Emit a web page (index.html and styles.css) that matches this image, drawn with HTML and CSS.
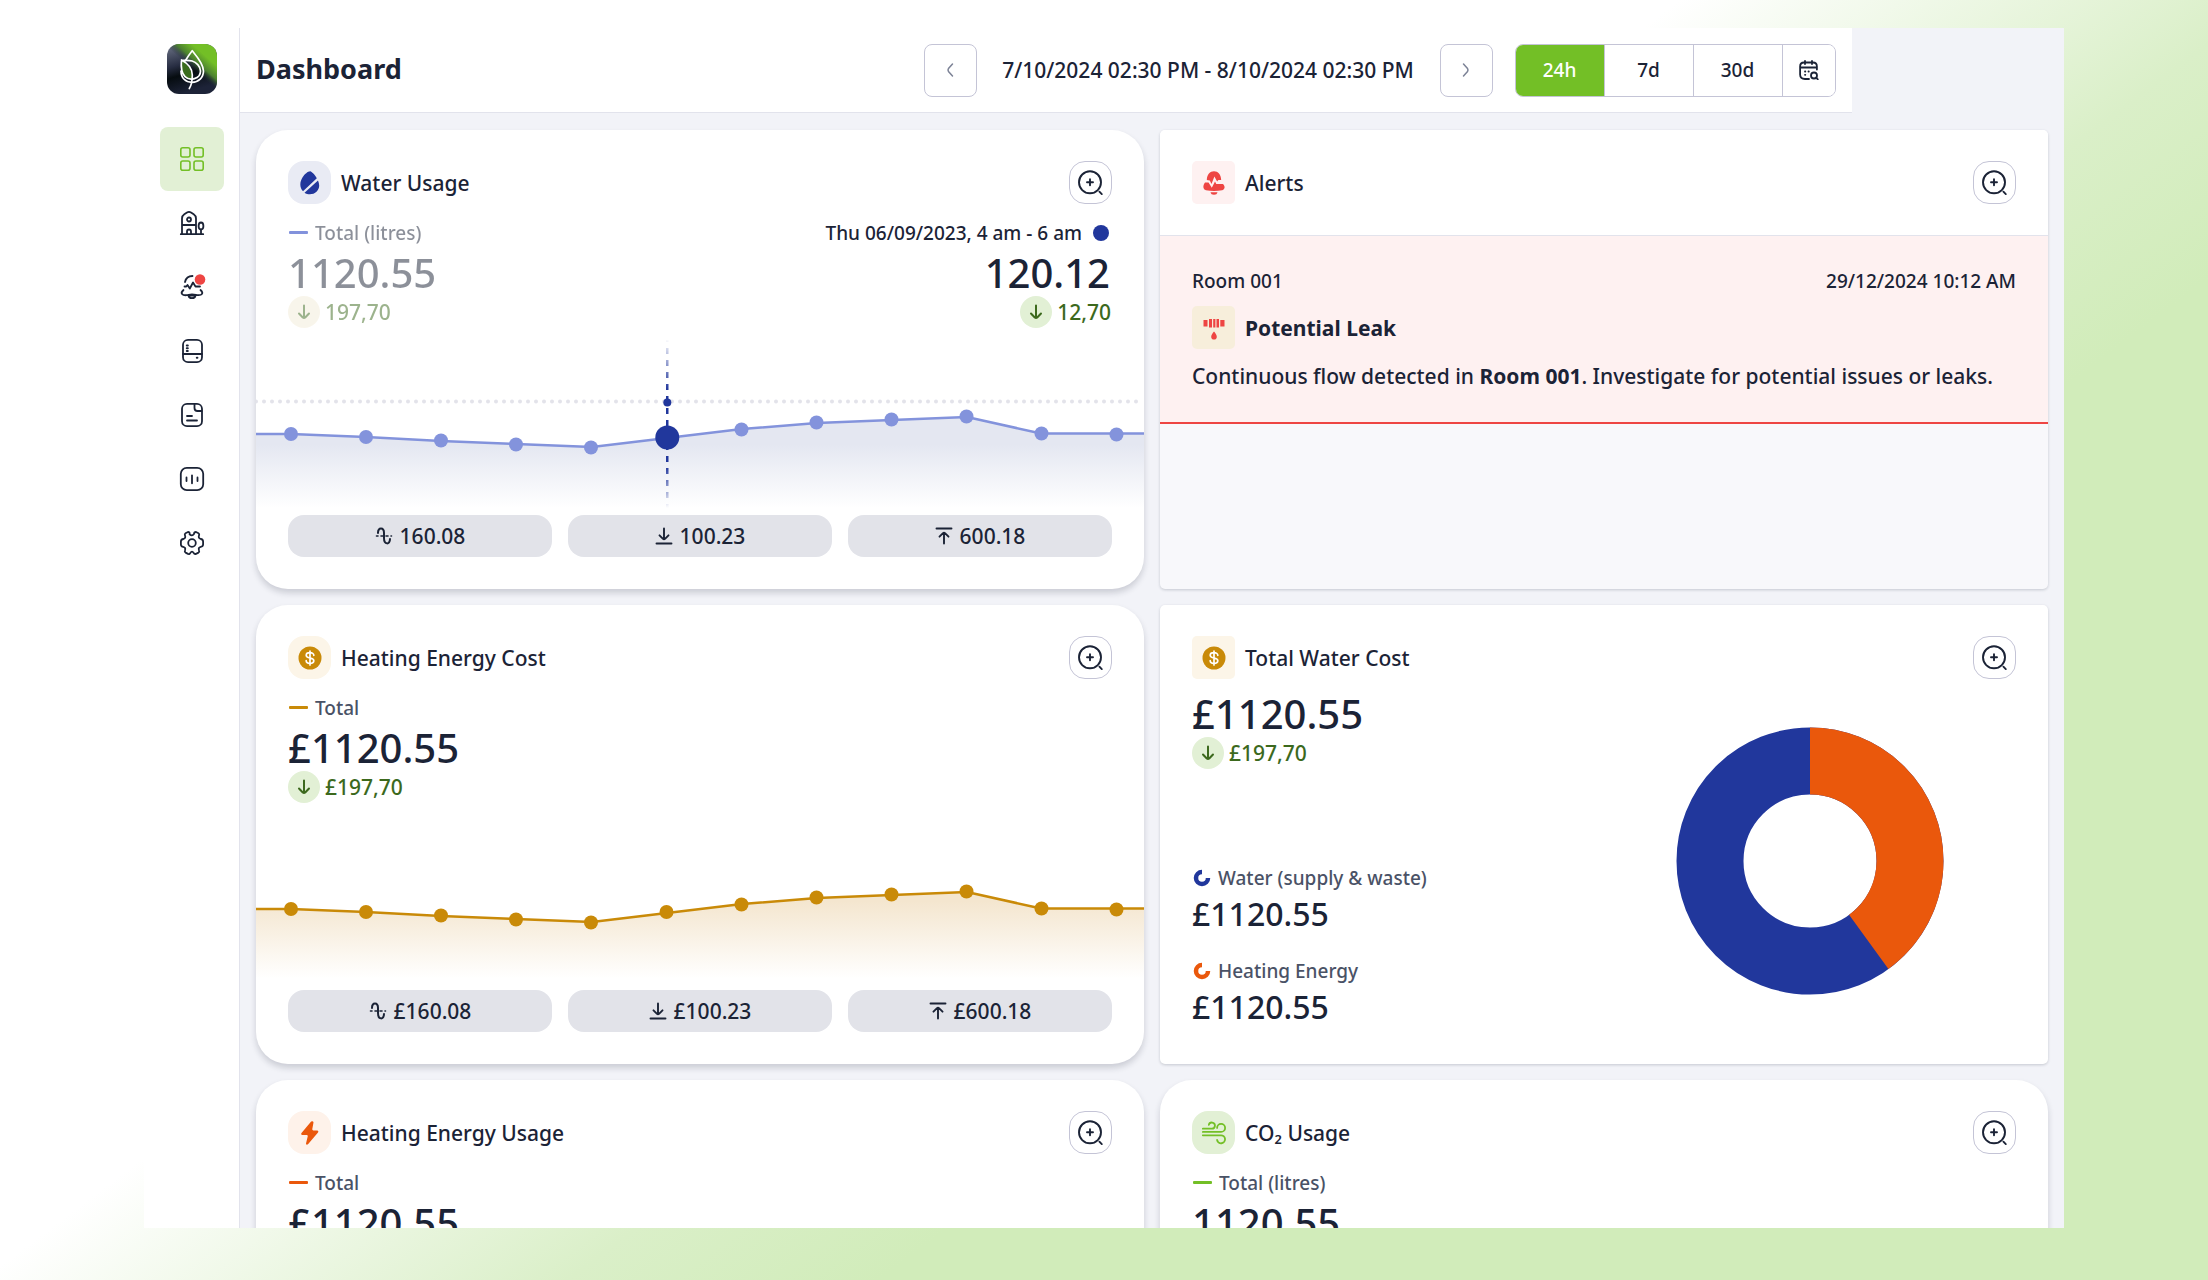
FILE: index.html
```html
<!DOCTYPE html>
<html lang="en">
<head>
<meta charset="utf-8">
<title>Dashboard</title>
<meta name="viewport" content="width=device-width, initial-scale=1">
<link rel="stylesheet" href="styles.css">
</head>
<body>
<svg class="defs" aria-hidden="true">
  <symbol id="i-zoom" viewBox="0 0 28 28"><g fill="none" stroke="currentColor" stroke-width="1.9" stroke-linecap="round"><circle cx="13" cy="13.300" r="11"/><path d="M13 10.300v6M10 13.300h6M22.400 22.700l2.400 2.400"/></g></symbol>
  <symbol id="i-down" viewBox="0 0 16 16"><path d="M8 1.500v12.500M3 9.500l3.800 4q1.200 1 2.400 0l3.800-4" fill="none" stroke="currentColor" stroke-width="2" stroke-linecap="round" stroke-linejoin="round"/></symbol>
  <symbol id="i-wave" viewBox="0 0 18 18"><g fill="none" stroke="currentColor" stroke-width="2" stroke-linecap="round"><path d="M3 6c0-6 6-6 6 0v5c0 7 6 7 6 1"/><path d="M1.500 9h1.500M6 9h2M11 9h2M16 9h.5" stroke-width="1.600"/></g></symbol>
  <symbol id="i-min" viewBox="0 0 18 18"><path d="M9 1.500v10.500M4.500 8.300l3.500 3.500q1 .8 2 0l3.500-3.500M1.500 16.500h15" fill="none" stroke="currentColor" stroke-width="1.900" stroke-linecap="round" stroke-linejoin="round"/></symbol>
  <symbol id="i-max" viewBox="0 0 18 18"><path d="M9 16.500v-10.500M4.500 9.700l3.500-3.500q1-.8 2 0l3.500 3.500M1.500 1.500h15" fill="none" stroke="currentColor" stroke-width="1.900" stroke-linecap="round" stroke-linejoin="round"/></symbol>
  <symbol id="i-coin" viewBox="0 0 24 24"><circle cx="12" cy="12" r="11.500" fill="currentColor"/><path d="M15.800 9.300c0-1.700-1.600-2.600-3.800-2.600s-3.800.9-3.800 2.600 1.600 2.400 3.800 2.700 3.800 1 3.800 2.700-1.600 2.600-3.800 2.600-3.800-.9-3.800-2.600M12 5v14" fill="none" stroke="#fff" stroke-width="1.700" stroke-linecap="round"/></symbol>
  <symbol id="i-ring" viewBox="0 0 18 18"><path d="M9 3A6 6 0 1 0 15 9" fill="none" stroke="currentColor" stroke-width="4.500"/></symbol>
  <linearGradient id="fill-water" x1="0" y1="0" x2="0" y2="1"><stop offset="0.3" stop-color="#e4e7f1"/><stop offset="1" stop-color="#fff"/></linearGradient>
  <linearGradient id="fill-heat" x1="0" y1="0" x2="0" y2="1"><stop offset="0.1" stop-color="#f4e6cf"/><stop offset="0.950" stop-color="#fff"/></linearGradient>
  <linearGradient id="cursor-fade" gradientUnits="userSpaceOnUse" x1="0" y1="11" x2="0" y2="180"><stop offset="0" stop-color="#21379c" stop-opacity="0"/><stop offset="0.300" stop-color="#21379c"/><stop offset="0.750" stop-color="#21379c"/><stop offset="1" stop-color="#21379c" stop-opacity="0"/></linearGradient>
  <linearGradient id="logo-green" x1="0.900" y1="0" x2="0.200" y2="0.800"><stop offset="0.250" stop-color="#73bf26"/><stop offset="0.450" stop-color="#4c8030"/><stop offset="0.600" stop-color="#1a2234" stop-opacity="0"/></linearGradient>
  <linearGradient id="logo-dark" x1="0" y1="0" x2="0.300" y2="1"><stop offset="0" stop-color="#70778a"/><stop offset="0.450" stop-color="#272d42"/><stop offset="0.650" stop-color="#060c10"/><stop offset="1" stop-color="#1d2338"/></linearGradient>
</svg>

<div class="app">
  <aside class="sidebar">
    <a class="logo" href="#" aria-label="Home">
      <svg viewBox="0 0 52 52"><rect x="1" y="1" width="50" height="50" rx="12" fill="url(#logo-dark)"/><rect x="1" y="1" width="50" height="50" rx="12" fill="url(#logo-green)"/><path d="M15.500 17c-.5 8 .5 14 4 17 2 1.800 4.600 2.400 6.500 2.300 1-7-3-14-10.500-19.300z" fill="#3a6b1c"/><g fill="none" stroke="#fff" stroke-width="1.700" stroke-linecap="round" stroke-linejoin="round"><path d="M19.500 17.500c2-3.500 4.500-7 6.700-9.800 4.500 5.500 11.300 13 11.300 20.300 0 6.500-5 11.300-11.500 11.300s-11-4.300-11-11.300"/><path d="M15.500 17c-.8 8 .2 13.500 3.500 16.700 4.500 4.300 15.500 2.800 15.500-5.700 0-4.500-4.500-9-8.300-10-3.500-1-6.700-.5-10.700-1zM15.500 17c7.500 4 10.800 9.500 10.800 15 0 4-1 10.500-3 13.500"/></g></svg>
    </a>
    <nav class="nav" aria-label="Main">
      <a class="nav-item active" href="#" aria-label="Dashboard"><svg viewBox="0 0 24 24"><g fill="none" stroke="currentColor" stroke-width="1.600"><rect x=".8" y=".8" width="9.200" height="9.200" rx="2"/><rect x="14" y=".8" width="9.200" height="9.200" rx="2"/><rect x=".8" y="14" width="9.200" height="9.200" rx="2"/><rect x="14" y="14" width="9.200" height="9.200" rx="2"/></g></svg></a>
      <a class="nav-item" href="#" aria-label="Buildings"><svg viewBox="0 0 24 24"><g fill="none" stroke="currentColor" stroke-width="1.800" stroke-linecap="round" stroke-linejoin="round"><path d="M.8 23.200h22.400M2 23V7.500q0-2.700 2.300-4.200L7 1.500q2-1.300 4 0l2.700 1.800Q16 4.800 16 7.500V23M2 14h14M7 23v-2.500q0-2 2-2t2 2V23M21 23v-4"/><circle cx="9" cy="8.500" r="2"/><ellipse cx="21" cy="15" rx="2.400" ry="3.500"/></g></svg></a>
      <a class="nav-item" href="#" aria-label="Alerts"><svg viewBox="0 0 24 24"><g fill="none" stroke="currentColor" stroke-width="1.800" stroke-linecap="round" stroke-linejoin="round"><path d="M5 7C6 2.500 9 1 12.500 1M20 11.500h-4.500l-2.500-4-3.200 6-2.300-3.500L6.300 11.500H4.500M3.500 15c-4 3.500-1 5.500 3 5.200 2-.2 3-.7 5.500-.7s4 .5 6 .7c4 .2 6-2 2.500-5.200M8.500 20.500c.5 3.500 6.500 3.500 7 0z"/></g><circle cx="20" cy="4.500" r="5.300" fill="#ee4543"/></svg></a>
      <a class="nav-item" href="#" aria-label="Meters"><svg viewBox="0 0 24 24"><g fill="none" stroke="currentColor" stroke-width="1.800" stroke-linecap="round"><rect x="3" y=".8" width="19" height="22.400" rx="5"/><path d="M3 15h19"/><path d="M6.800 6.500h1M6.800 9.300h1M6.800 12h1M16.800 18.800h.6" stroke-width="2"/></g></svg></a>
      <a class="nav-item" href="#" aria-label="Reports"><svg viewBox="0 0 24 24"><g fill="none" stroke="currentColor" stroke-width="1.800" stroke-linecap="round"><rect x="2" y=".8" width="20" height="22.400" rx="5"/><path d="M14.500 1.500v3.500q0 3 3 3h4M7 13h5M7 17.500h10"/></g></svg></a>
      <a class="nav-item" href="#" aria-label="Statistics"><svg viewBox="0 0 24 24"><g fill="none" stroke="currentColor" stroke-width="1.800" stroke-linecap="round"><rect x=".8" y=".8" width="22.400" height="22.400" rx="6"/><path d="M6.500 10.500v3.500M12 8.300v8M17.500 10.500v3.500"/></g></svg></a>
      <a class="nav-item" href="#" aria-label="Settings"><svg viewBox="0 0 24 24"><g fill="none" stroke="currentColor" stroke-width="1.800" stroke-linejoin="round"><path d="M9.600 3.300Q10 1 8 1L5.500 2.300Q4.300 3 5 4.500 6 7 3.500 8 1 8.200.9 10.500v3Q1 15.700 3.200 15.800 6 16.500 5 19.300q-.7 1.500.6 2.300L8 22.900q2 .5 2.300-1Q12 19.500 13.700 21.900q.6 1.500 2.300 1l2.500-1.300q1.200-.8.500-2.300-1-2.800 1.800-3.500Q23 15.600 23.100 13.500v-3Q23 8.200 20.700 8 18 7.200 19 4.500q.7-1.500-.5-2.200L16 1q-2 0-2 2Q12 5.500 9.600 3.300z"/><circle cx="12" cy="12" r="3.800"/></g></svg></a>
    </nav>
  </aside>

  <div class="main">
    <header class="topbar">
      <h1>Dashboard</h1>
      <div class="range">
        <button class="step" type="button" aria-label="Previous period"><svg viewBox="0 0 16 16"><path d="M10.500 2l-4 4.500q-1 1.500 0 3l4 4.500" fill="none" stroke="currentColor" stroke-width="1.500" stroke-linecap="round"/></svg></button>
        <span class="range-text">7/10/2024 02:30 PM - 8/10/2024 02:30 PM</span>
        <button class="step" type="button" aria-label="Next period"><svg viewBox="0 0 16 16"><path d="M5.500 2l4 4.500q1 1.500 0 3l-4 4.500" fill="none" stroke="currentColor" stroke-width="1.500" stroke-linecap="round"/></svg></button>
      </div>
      <div class="segments">
        <button class="segment selected" type="button">24h</button>
        <button class="segment" type="button">7d</button>
        <button class="segment" type="button">30d</button>
        <button class="segment calendar" type="button" aria-label="Pick dates"><svg viewBox="0 0 20 20"><g fill="none" stroke="currentColor" stroke-width="1.800" stroke-linecap="round"><path d="M10 19H6q-4.900 0-4.900-4.500V6.500Q1.100 2.500 5 2.500h9q3.900 0 3.900 4v3M1.100 7.500h16.800M6 1v3M13 1v3"/><circle cx="15" cy="15.500" r="3"/><path d="M17.300 17.800l1.500 1.500M6 11.500h.3M9.500 11.500h.3M6 14.800h.3"/></g></svg></button>
      </div>
    </header>

    <main class="grid">
      <section class="card round">
        <div class="card-head">
          <span class="badge water"><svg viewBox="0 0 24 24"><path d="M12.300.3c1.200.3 4.800 3.500 6.500 7L5 20.300C1 16 2 10.300 4.600 6.300 6.500 3.300 10 .2 12.300.3zM20 9.500c2 4.500 1.500 8.500-1.500 11.300-3 3-8.500 3.300-12 1z" fill="currentColor"/></svg></span>
          <h2>Water Usage</h2>
          <button class="zoom" type="button" aria-label="Enlarge Water Usage"><svg><use href="#i-zoom"/></svg></button>
        </div>
        <div class="readings">
          <div class="reading muted">
            <p class="legend water-soft"><span class="dash"></span>Total (litres)</p>
            <p class="value">1120.55</p>
            <p class="delta"><span class="arrow"><svg><use href="#i-down"/></svg></span>197,70</p>
          </div>
          <div class="reading end">
            <p class="legend dark">Thu 06/09/2023, 4 am - 6 am<span class="dot"></span></p>
            <p class="value">120.12</p>
            <p class="delta"><span class="arrow"><svg><use href="#i-down"/></svg></span>12,70</p>
          </div>
        </div>
        <svg class="chart" viewBox="0 0 888 187" preserveAspectRatio="xMidYMid slice" role="img" aria-label="Water usage over time">
          <path d="M0 106H35L110 109 185 113 260 116 336 119 411 110 486 101 561 95 636 92 711 89 785 105.500H888V180H0z" fill="url(#fill-water)"/>
          <path d="M0 73.500H888" stroke="#e3e3ea" stroke-width="4" stroke-linecap="round" stroke-dasharray="0 8"/>
          <path d="M0 106H35L110 109 185 113 260 116 336 119 411 110 486 101 561 95 636 92 711 89 785 105.500H888" fill="none" stroke="#8393dc" stroke-width="2.500"/>
          <g fill="#8393dc"><circle cx="35" cy="106" r="7"/><circle cx="110" cy="109" r="7"/><circle cx="185" cy="112.500" r="7"/><circle cx="260" cy="116.500" r="7"/><circle cx="335" cy="119.500" r="7"/><circle cx="485.500" cy="101.500" r="7"/><circle cx="560.500" cy="94.500" r="7"/><circle cx="635.500" cy="91.500" r="7"/><circle cx="710.500" cy="88.500" r="7"/><circle cx="785.500" cy="105.500" r="7"/><circle cx="860.500" cy="106.500" r="7"/></g>
          <rect x="410" y="11" width="2.500" height="169" fill="url(#cursor-fade)" mask="url(#cursor-dashes)"/>
          <mask id="cursor-dashes" maskUnits="userSpaceOnUse" x="400" y="0" width="24" height="187"><path d="M411.300 12V181" stroke="#fff" stroke-width="4" stroke-dasharray="6 6" stroke-dashoffset="4"/></mask>
          <g fill="#21379c"><circle cx="411.300" cy="74.500" r="4"/><circle cx="411.300" cy="109.500" r="12"/></g>
        </svg>
        <ul class="stats">
          <li><svg><use href="#i-wave"/></svg>160.08</li>
          <li><svg><use href="#i-min"/></svg>100.23</li>
          <li><svg><use href="#i-max"/></svg>600.18</li>
        </ul>
      </section>

      <section class="card alerts">
        <div class="card-head">
          <span class="badge alert"><svg viewBox="0 0 24 24"><path d="M4.800 9C5 3.500 8 .3 12 .3S19 3.500 19.200 9h-2.800l-1.300 1.500L12.400 5.500 9.500 13 7.800 9.500 4.800 9zM3 11.500h3.500l3.300 5.300L13 10.500l1.300 2.500h6.700c2.500 2.500 2 5.500-1 6.300-5 1-11 1-16 0-3-.8-3.500-4.500-1-7.800zM8.500 21.300h7q-.5 2.500-3.500 2.500t-3.500-2.500z" fill="currentColor"/></svg></span>
          <h2>Alerts</h2>
          <button class="zoom" type="button" aria-label="Enlarge Alerts"><svg><use href="#i-zoom"/></svg></button>
        </div>
        <article class="alert-item">
          <p class="alert-meta"><span>Room 001</span><time>29/12/2024 10:12 AM</time></p>
          <h3><span class="badge leak"><svg viewBox="0 0 24 24"><path d="M1.500 4h4v6.500h-4zM7 3h3v8.500H7zM11.200 3h2.200v8.500h-2.200zM14.500 3h2.500v8.500h-2.500zM18.300 4h4.200v6.500h-4.200zM12 15.500c1.500 1.800 2.800 3.800 2.800 5.200a2.800 2.800 0 0 1-5.600 0c0-1.400 1.300-3.400 2.800-5.200z" fill="currentColor"/></svg></span>Potential Leak</h3>
          <p class="alert-text">Continuous flow detected in <b>Room 001</b>. Investigate for potential issues or leaks.</p>
        </article>
      </section>

      <section class="card round">
        <div class="card-head">
          <span class="badge coin"><svg><use href="#i-coin"/></svg></span>
          <h2>Heating Energy Cost</h2>
          <button class="zoom" type="button" aria-label="Enlarge Heating Energy Cost"><svg><use href="#i-zoom"/></svg></button>
        </div>
        <div class="readings">
          <div class="reading">
            <p class="legend gold"><span class="dash"></span>Total</p>
            <p class="value">£1120.55</p>
            <p class="delta"><span class="arrow"><svg><use href="#i-down"/></svg></span>£197,70</p>
          </div>
        </div>
        <svg class="chart" viewBox="0 0 888 187" preserveAspectRatio="xMidYMid slice" role="img" aria-label="Heating energy cost over time">
          <path d="M0 106H35L110 109 185 113 260 116 336 119 411 110 486 101 561 95 636 92 711 89 785 105.500H888V180H0z" fill="url(#fill-heat)"/>
          <path d="M0 106H35L110 109 185 113 260 116 336 119 411 110 486 101 561 95 636 92 711 89 785 105.500H888" fill="none" stroke="#c98a08" stroke-width="2.500"/>
          <g fill="#c98a08"><circle cx="35" cy="106" r="7"/><circle cx="110" cy="109" r="7"/><circle cx="185" cy="112.500" r="7"/><circle cx="260" cy="116.500" r="7"/><circle cx="335" cy="119.500" r="7"/><circle cx="410.500" cy="109" r="7"/><circle cx="485.500" cy="101.500" r="7"/><circle cx="560.500" cy="94.500" r="7"/><circle cx="635.500" cy="91.500" r="7"/><circle cx="710.500" cy="88.500" r="7"/><circle cx="785.500" cy="105.500" r="7"/><circle cx="860.500" cy="106.500" r="7"/></g>
        </svg>
        <ul class="stats">
          <li><svg><use href="#i-wave"/></svg>£160.08</li>
          <li><svg><use href="#i-min"/></svg>£100.23</li>
          <li><svg><use href="#i-max"/></svg>£600.18</li>
        </ul>
      </section>

      <section class="card">
        <div class="card-head">
          <span class="badge coin square"><svg><use href="#i-coin"/></svg></span>
          <h2>Total Water Cost</h2>
          <button class="zoom" type="button" aria-label="Enlarge Total Water Cost"><svg><use href="#i-zoom"/></svg></button>
        </div>
        <div class="split">
          <div class="split-text">
            <p class="value">£1120.55</p>
            <p class="delta"><span class="arrow"><svg><use href="#i-down"/></svg></span>£197,70</p>
            <div class="breakdown">
              <div><p class="legend blue"><svg><use href="#i-ring"/></svg>Water (supply &amp; waste)</p><p class="subvalue">£1120.55</p></div>
              <div><p class="legend orange"><svg><use href="#i-ring"/></svg>Heating Energy</p><p class="subvalue">£1120.55</p></div>
            </div>
          </div>
          <svg class="donut" viewBox="0 0 268 268" role="img" aria-label="Water 60%, heating energy 40%">
            <circle cx="134" cy="134" r="100" fill="none" stroke="#21379c" stroke-width="67"/>
            <circle cx="134" cy="134" r="100" fill="none" stroke="#ea580c" stroke-width="67" pathLength="100" stroke-dasharray="40 60" transform="rotate(-90 134 134)"/>
          </svg>
        </div>
      </section>

      <section class="card round">
        <div class="card-head">
          <span class="badge bolt"><svg viewBox="0 0 24 24"><path d="M14.500.3Q13 .2 12.300 1.500L3.500 12q-1 1.800 1 2h4.200q1.300.2 1 1.500L8 22.500q.3 2 2 .8L20 11.500q1-1.700-1-2h-3.700q-1.200-.2-1-1.500l1.200-6.500q0-1-1-1.200z" fill="currentColor"/></svg></span>
          <h2>Heating Energy Usage</h2>
          <button class="zoom" type="button" aria-label="Enlarge Heating Energy Usage"><svg><use href="#i-zoom"/></svg></button>
        </div>
        <div class="readings">
          <div class="reading">
            <p class="legend orange"><span class="dash"></span>Total</p>
            <p class="value">£1120.55</p>
          </div>
        </div>
      </section>

      <section class="card round">
        <div class="card-head">
          <span class="badge wind"><svg viewBox="0 0 24 24"><path d="M.8 7.700h9a3.100 3.100 0 1 0-3-3.800M.8 10.900h18.300a4 4 0 1 0-4-4M.8 14.300h18a4 4 0 1 1-3.700 4.700" fill="none" stroke="currentColor" stroke-width="1.800" stroke-linecap="round"/></svg></span>
          <h2>CO₂ Usage</h2>
          <button class="zoom" type="button" aria-label="Enlarge CO₂ Usage"><svg><use href="#i-zoom"/></svg></button>
        </div>
        <div class="readings">
          <div class="reading">
            <p class="legend green"><span class="dash"></span>Total (litres)</p>
            <p class="value">1120.55</p>
          </div>
        </div>
      </section>
    </main>
  </div>
</div>
</body>
</html>
```
FILE: styles.css
```css
* {
  box-sizing: border-box;
}

:root {
  --ink: #1b2336;
  --slate: #4a5266;
  --line: #e2e3ec;
  --control: #c4c4d6;
  --green: #73bf26;
  --green-soft: #e2f0d5;
  --green-dark: #3c691d;
  --blue: #21379c;
  --orange: #ea580c;
  --gold: #c98a08;
  --red: #ee4543;
}

body {
  margin: 0;
  height: 100vh;
  padding: 28px 144px 52px;
  background: linear-gradient(143deg, #fff 43%, #daefc8 58%, #d1ecba 66%);
  color: var(--ink);
  font: 500 21px/28px "Noto Sans", "Open Sans", sans-serif;
}

h1, h2, h3, p, ul {
  margin: 0;
  padding: 0;
  font-weight: 500;
}

button {
  display: flex;
  align-items: center;
  justify-content: center;
  padding: 0;
  border: 1px solid var(--control);
  background: #fff;
  color: var(--ink);
  font: inherit;
}

svg {
  display: block;
  flex: none;
}

.defs {
  position: absolute;
  width: 0;
  height: 0;
}

.app {
  display: flex;
  height: 100%;
  overflow: hidden;
  background: #f2f3f8;
}

/* Sidebar */
.sidebar {
  flex: none;
  display: flex;
  flex-direction: column;
  align-items: center;
  width: 96px;
  padding-top: 15px;
  border-right: 1px solid var(--line);
  background: #fff;
}

.logo svg {
  width: 52px;
  height: 52px;
}

.nav {
  padding-top: 32px;
}

.nav-item {
  display: grid;
  place-items: center;
  width: 64px;
  height: 64px;
  border-radius: 8px;
  color: var(--ink);
}

.nav-item.active {
  background: var(--green-soft);
  color: var(--green);
}

.nav-item svg {
  width: 24px;
  height: 24px;
  overflow: visible;
}

/* Top bar */
.main {
  flex: 1;
  min-width: 0;
}

.topbar {
  display: flex;
  align-items: center;
  width: fit-content;
  min-width: 88.35%;
  height: 85px;
  padding: 0 16px;
  border-bottom: 1px solid var(--line);
  background: #fff;
}

h1 {
  margin-right: auto;
  padding-bottom: 2px;
  font-size: 27px;
  font-weight: 700;
}

.range {
  display: flex;
  align-items: center;
  gap: 21px;
  margin-right: 22px;
}

.range-text {
  min-width: 421px;
  text-align: center;
}

.step {
  width: 53px;
  height: 53px;
  border-radius: 8px;
  color: #7c8296;
}

.step svg {
  width: 16px;
  height: 16px;
}

.segments {
  display: flex;
  height: 53px;
  overflow: hidden;
  border: 1px solid var(--control);
  border-radius: 8px;
}

.segment {
  width: 89px;
  border-width: 0 0 0 1px;
  font-size: 19px;
}

.segment.selected {
  width: 88px;
  border: 0;
  background: var(--green);
  color: #fff;
}

.segment.calendar {
  width: 53px;
}

.calendar svg {
  width: 20px;
  height: 20px;
}

/* Card grid */
.grid {
  display: grid;
  grid-template-columns: 1fr 1fr;
  grid-auto-rows: minmax(459px, auto);
  gap: 16px;
  padding: 17px 16px;
}

.card {
  display: flex;
  flex-direction: column;
  overflow: hidden;
  padding: 31px 0;
  border-radius: 5px;
  background: #fff;
  box-shadow: 0 1px 3px rgba(27, 35, 54, .2);
}

.card.round {
  border-radius: 32px;
  box-shadow: 0 4px 6px rgba(27, 35, 54, .18);
}

.card-head {
  display: flex;
  align-items: center;
  padding: 0 32px;
}

h2 {
  margin: 0 auto 0 10px;
  font-size: 21px;
}

.zoom {
  width: 43px;
  height: 43px;
  border-radius: 16px;
}

.zoom svg {
  width: 28px;
  height: 28px;
}

.badge {
  flex: none;
  display: grid;
  place-items: center;
  width: 43px;
  height: 43px;
  border-radius: 16px;
}

.badge svg {
  width: 24px;
  height: 24px;
}

.badge.water { background: #e9ebf4; color: var(--blue); }
.badge.coin { background: #fcf5e8; color: var(--gold); }
.badge.bolt { background: #fef2ea; color: var(--orange); }
.badge.wind { background: var(--green-soft); color: var(--green); }
.badge.alert { background: #fef1f1; color: var(--red); }
.badge.leak { background: #f7eedb; color: var(--red); }
.badge.alert, .badge.leak, .badge.square { border-radius: 5px; }

/* Readings */
.readings {
  display: flex;
  justify-content: space-between;
  padding: 16px 32px 0;
}

.reading.muted {
  opacity: .5;
}

.muted .legend {
  color: var(--ink);
}

.muted .arrow {
  background: #f3ecd8;
}

.reading.end {
  display: flex;
  flex-direction: column;
  align-items: flex-end;
}

.legend {
  display: flex;
  align-items: center;
  height: 25px;
  margin-bottom: 4px;
  color: var(--slate);
  font-size: 19px;
}

.legend svg {
  width: 18px;
  height: 18px;
  margin: 0 7px 0 1px;
}

.legend.blue svg { color: var(--blue); }
.legend.orange svg { color: var(--orange); }
.legend.dark { color: var(--ink); }

.dash {
  width: 19px;
  height: 3px;
  margin: 0 7px 0 1px;
  border-radius: 1px;
}

.water-soft .dash { background: #0727b9; }
.gold .dash { background: var(--gold); }
.orange .dash { background: var(--orange); }
.green .dash { background: var(--green); }

.dot {
  width: 16px;
  height: 16px;
  margin: 0 3px 0 11px;
  border-radius: 50%;
  background: var(--blue);
}

.value {
  font-size: 40px;
  line-height: 48px;
}

.end .value {
  padding-right: 2px;
}

.delta {
  display: flex;
  align-items: center;
  gap: 5px;
  margin-top: -1px;
  color: var(--green-dark);
  line-height: 32px;
}

.end .delta {
  padding-right: 1px;
}

.arrow {
  display: grid;
  place-items: center;
  width: 32px;
  height: 32px;
  border-radius: 50%;
  background: var(--green-soft);
}

.arrow svg {
  width: 16px;
  height: 16px;
}

.chart {
  width: 100%;
  height: 187px;
}

.stats {
  display: grid;
  grid-template-columns: repeat(3, 1fr);
  gap: 16px;
  padding: 0 32px;
  list-style: none;
}

.stats li {
  display: flex;
  align-items: center;
  justify-content: center;
  gap: 7px;
  height: 42px;
  border-radius: 16px;
  background: #e2e3e9;
}

.stats svg {
  width: 18px;
  height: 18px;
}

/* Alerts */
.alerts {
  background: #f8f8fb;
}

.alerts .card-head {
  margin-top: -31px;
  padding: 31px 32px;
  border-bottom: 1px solid var(--line);
  background: #fff;
}

.alert-item {
  padding: 32px;
  border-bottom: 2px solid var(--red);
  background: #fef1f1;
}

.alert-meta {
  display: flex;
  justify-content: space-between;
  font-size: 19px;
  line-height: 26px;
}

h3 {
  display: flex;
  align-items: center;
  gap: 10px;
  margin: 12px 0 13px;
  font-size: 21px;
  font-weight: 700;
}

.alert-text b {
  font-weight: 700;
}

/* Cost breakdown */
.split {
  flex: 1;
  display: grid;
  grid-template-columns: 1fr 1fr;
  align-items: center;
  padding: 11px 32px 2px;
}

.split-text {
  display: flex;
  flex-direction: column;
  align-self: stretch;
}

.breakdown {
  display: grid;
  gap: 24px;
  margin: auto 0 4px;
}

.subvalue {
  font-size: 32px;
  line-height: 40px;
}

.donut {
  justify-self: center;
  width: 268px;
  height: 268px;
}
```
